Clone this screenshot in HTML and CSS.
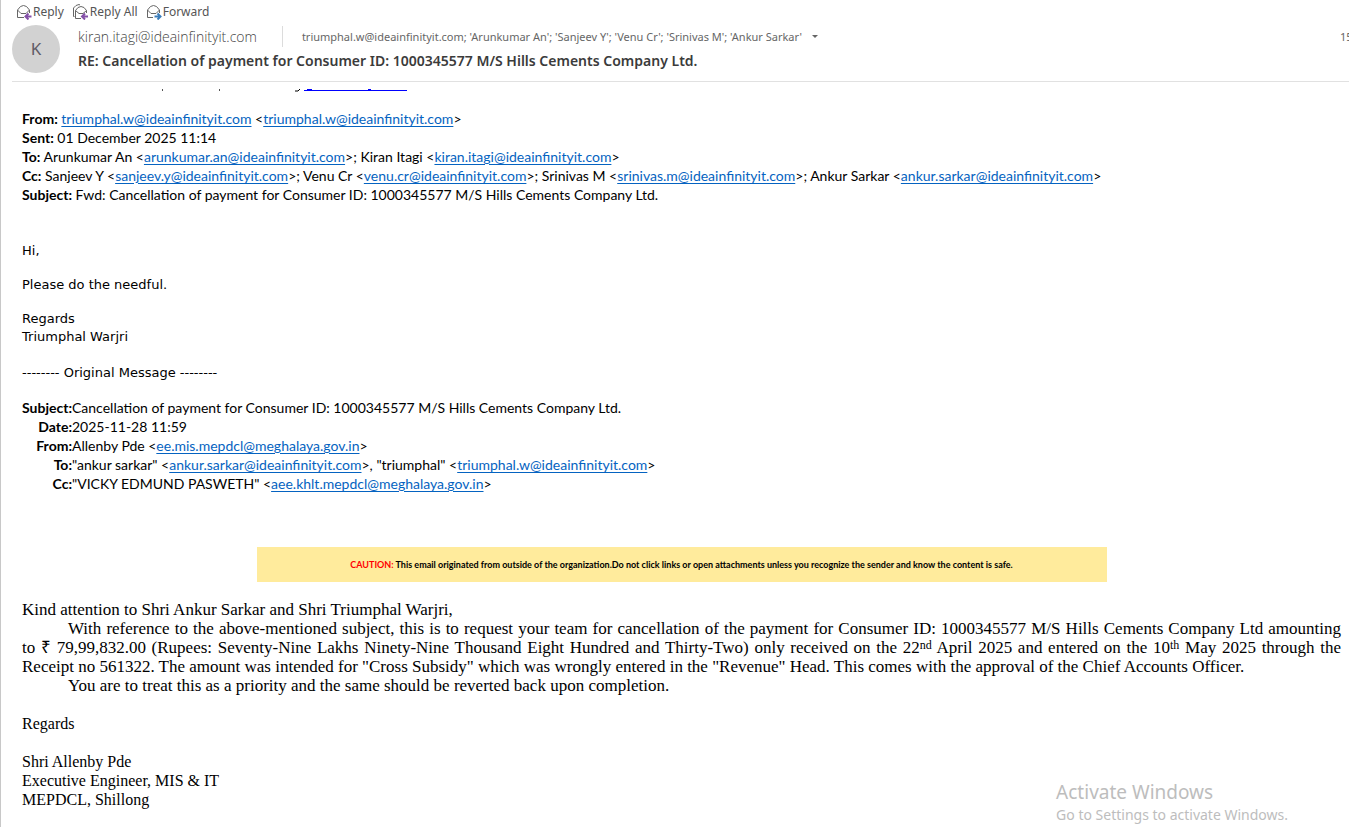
FILE: index.html
```html
<!DOCTYPE html>
<html lang="en">
<head>
    <meta charset="UTF-8">
    <meta name="viewport" content="width=device-width, initial-scale=1.0">
    <title>RE: Cancellation of payment for Consumer ID: 1000345577 M/S Hills Cements Company Ltd.</title>
    <link rel="stylesheet" href="styles.css">
</head>
<body>
    <div class="mail">
        <div class="toolbar">
            <button type="button" class="reply">
                <svg width="16" height="16" viewBox="0 0 16 16" fill="none">
                    <path d="M8 13.5H1.5V6L4.5 2.5L7.5 1.5L10.5 2.5L13.5 6V9M1.5 6L5 9.5H10L13.5 6" stroke="#666" />
                    <path d="M15.5 12.5H10M12.5 9.5L9.5 12.5L12.5 15.5" stroke="#8450a8" stroke-width="2" />
                </svg>
                Reply
            </button>
            <button type="button" class="reply-all">
                <svg width="17" height="16" viewBox="0 0 17 16" fill="none">
                    <path d="M2.5 12.5H1.5V4L4 1.5L7 0.5L8 1" stroke="#666" />
                    <path d="M9 14.5H3.5V6.5L6 3.5L9 2.5L12 3.5L14.5 6.5V9M3.5 6.5L7 9.5H11L14.5 6.5" stroke="#666" />
                    <path d="M16 12.5H10.5M13 9.5L10 12.5L13 15.5" stroke="#8450a8" stroke-width="2" />
                </svg>
                Reply All
            </button>
            <button type="button" class="forward">
                <svg width="16" height="16" viewBox="0 0 16 16" fill="none">
                    <path d="M7 13.5H1.5V6L4.5 2.5L7.5 1.5L10.5 2.5L13.5 6V9M1.5 6L5 9.5H10L13.5 6" stroke="#666" />
                    <path d="M8.5 12.5H14M11.5 9.5L14.5 12.5L11.5 15.5" stroke="#3c7ebb" stroke-width="2" />
                </svg>
                Forward
            </button>
        </div>

        <header class="mail-header">
            <div class="avatar">K</div>
            <div class="details">
                <div class="people">
                    <span class="sender">kiran.itagi@ideainfinityit.com</span>
                    <span class="recipients">triumphal.w@ideainfinityit.com; 'Arunkumar An'; 'Sanjeev Y'; 'Venu Cr'; 'Srinivas M'; 'Ankur Sarkar'</span>
                    <button type="button" class="expand" aria-label="Show all recipients"></button>
                    <span class="date">15</span>
                </div>
                <h1>RE: Cancellation of payment for Consumer ID: 1000345577 M/S Hills Cements Company Ltd.</h1>
            </div>
        </header>

        <main class="message">
            <!-- bottom edge of the line scrolled under the header -->
            <svg class="scrolled-line" width="400" height="3" viewBox="0 0 400 3" aria-hidden="true">
                <path d="M140.5 0V2M197.5 0V2" stroke="#555" />
                <path d="M273 2H276L278 0" stroke="#000" fill="none" />
                <path d="M282 1.5H385M285 0.5H290M346 0.5H349" stroke="#00f" />
            </svg>

            <div class="quoted">
                <div><b>From:</b> <a href="mailto:triumphal.w@ideainfinityit.com">triumphal.w@ideainfinityit.com</a> &lt;<a href="mailto:triumphal.w@ideainfinityit.com">triumphal.w@ideainfinityit.com</a>&gt;</div>
                <div><b>Sent:</b> 01 December 2025 11:14</div>
                <div><b>To:</b> Arunkumar An &lt;<a href="mailto:arunkumar.an@ideainfinityit.com">arunkumar.an@ideainfinityit.com</a>&gt;; Kiran Itagi &lt;<a href="mailto:kiran.itagi@ideainfinityit.com">kiran.itagi@ideainfinityit.com</a>&gt;</div>
                <div><b>Cc:</b> Sanjeev Y &lt;<a href="mailto:sanjeev.y@ideainfinityit.com">sanjeev.y@ideainfinityit.com</a>&gt;; Venu Cr &lt;<a href="mailto:venu.cr@ideainfinityit.com">venu.cr@ideainfinityit.com</a>&gt;; Srinivas M &lt;<a href="mailto:srinivas.m@ideainfinityit.com">srinivas.m@ideainfinityit.com</a>&gt;; Ankur Sarkar &lt;<a href="mailto:ankur.sarkar@ideainfinityit.com">ankur.sarkar@ideainfinityit.com</a>&gt;</div>
                <div><b>Subject:</b> Fwd: Cancellation of payment for Consumer ID: 1000345577 M/S Hills Cements Company Ltd.</div>
            </div>

            <div class="note">
                <p>Hi,</p>
                <p>Please do the needful.</p>
                <p>Regards<br>Triumphal Warjri</p>
                <p class="divider">-------- Original Message --------</p>
            </div>

            <table class="original">
                <tr>
                    <th scope="row">Subject:</th>
                    <td>Cancellation of payment for Consumer ID: 1000345577 M/S Hills Cements Company Ltd.</td>
                </tr>
                <tr>
                    <th scope="row">Date:</th>
                    <td>2025-11-28 11:59</td>
                </tr>
                <tr>
                    <th scope="row">From:</th>
                    <td>Allenby Pde &lt;<a href="mailto:ee.mis.mepdcl@meghalaya.gov.in">ee.mis.mepdcl@meghalaya.gov.in</a>&gt;</td>
                </tr>
                <tr>
                    <th scope="row">To:</th>
                    <td>"ankur sarkar" &lt;<a href="mailto:ankur.sarkar@ideainfinityit.com">ankur.sarkar@ideainfinityit.com</a>&gt;, "triumphal" &lt;<a href="mailto:triumphal.w@ideainfinityit.com">triumphal.w@ideainfinityit.com</a>&gt;</td>
                </tr>
                <tr>
                    <th scope="row">Cc:</th>
                    <td>"VICKY EDMUND PASWETH" &lt;<a href="mailto:aee.khlt.mepdcl@meghalaya.gov.in">aee.khlt.mepdcl@meghalaya.gov.in</a>&gt;</td>
                </tr>
            </table>

            <div class="caution"><span>CAUTION:</span> This email originated from outside of the organization.Do not click links or open attachments unless you recognize the sender and know the content is safe.</div>

            <div class="letter">
                <p>Kind attention to Shri Ankur Sarkar and Shri Triumphal Warjri,</p>
                <p class="indent justified">With reference to the above-mentioned subject, this is to request your team for cancellation of the payment for Consumer ID: 1000345577 M/S Hills Cements Company Ltd amounting</p>
                <p class="justified">to ₹ 79,99,832.00 (Rupees: Seventy-Nine Lakhs Ninety-Nine Thousand Eight Hundred and Thirty-Two) only received on the 22<sup>nd</sup> April 2025 and entered on the 10<sup>th</sup> May 2025 through the</p>
                <p>Receipt no 561322. The amount was intended for "Cross Subsidy" which was wrongly entered in the "Revenue" Head. This comes with the approval of the Chief Accounts Officer.</p>
                <p class="indent">You are to treat this as a priority and the same should be reverted back upon completion.</p>
            </div>

            <div class="signature">
                <p>Regards</p>
                <p>Shri Allenby Pde<br>Executive Engineer, MIS &amp; IT<br>MEPDCL, Shillong</p>
            </div>
        </main>
    </div>

    <div class="watermark">
        <div class="watermark-title">Activate Windows</div>
        <div>Go to Settings to activate Windows.</div>
    </div>
</body>
</html>
```

FILE: styles.css
```css
* {
    box-sizing: border-box;
}

body {
    margin: 0;
    background-color: #ffffff;
    color: #000000;
    overflow: hidden;
}

p,
h1 {
    margin: 0;
}

button {
    padding: 0;
    border: none;
    background: none;
    font: inherit;
    color: inherit;
    cursor: pointer;
}

a {
    color: #0563c1;
    text-underline-offset: 2px;
}

.mail {
    min-height: 100vh;
    border-left: 1px solid #c8c8c8;
}

.toolbar {
    display: flex;
    gap: 8px;
    height: 25px;
    padding: 0 0 2px 15px;
    font: 12px/16px "Noto Sans", sans-serif;
    color: #555555;
}

.toolbar button {
    display: flex;
    align-items: center;
    gap: 1px;
}

.mail-header {
    display: flex;
    gap: 18px;
    height: 57px;
    margin-left: 11px;
    border-bottom: 1px solid #e1e1e1;
    font-family: "Noto Sans", sans-serif;
}

.avatar {
    flex: none;
    width: 48px;
    height: 48px;
    border-radius: 50%;
    background-color: #d2d2d2;
    color: #5f5b66;
    font-size: 17px;
    line-height: 48px;
    text-align: center;
}

.details {
    flex: 1;
    min-width: 0;
    white-space: nowrap;
}

.people {
    display: flex;
    align-items: center;
    height: 23px;
    color: #666666;
}

.sender {
    padding-right: 25px;
    border-right: 1px solid #dcdcdc;
    color: #444444;
    font: 300 14px/21px "Open Sans", sans-serif;
}

.recipients {
    padding-left: 19px;
    font-size: 11px;
}

.expand {
    margin-left: 10px;
    border: 3px solid transparent;
    border-top-color: #666666;
    border-bottom: none;
}

.date {
    width: 9px;
    margin-left: auto;
    overflow: hidden;
    font-size: 11px;
}

h1 {
    color: #3b3b3b;
    font-size: 14px;
    font-weight: 600;
    line-height: 26px;
}

.message {
    padding: 7px 8px 16px 21px;
}

.scrolled-line {
    display: block;
}

.quoted,
.original {
    font: 14px/19px Lato, sans-serif;
}

.quoted {
    margin-top: 17px;
}

.note {
    margin-top: 38px;
    font: 13px/18px "DejaVu Sans", sans-serif;
}

.note p {
    margin-bottom: 16px;
}

.note .divider {
    margin: 18px 0 16px;
}

.original {
    border-collapse: collapse;
}

.original th,
.original td {
    padding: 0;
}

.original th {
    text-align: right;
}

.caution {
    max-width: 850px;
    margin: 54px auto 18px;
    background-color: #ffeb9c;
    font: bold 9px/35px Lato, sans-serif;
    text-align: center;
}

.caution span {
    color: #ff0000;
}

.letter {
    font: 17px/19px "Liberation Serif", serif;
}

.letter sup {
    font-size: 12px;
    line-height: 0;
    vertical-align: 4px;
}

.indent {
    text-indent: 46px;
}

.justified {
    text-align: justify;
    text-align-last: justify;
}

.signature {
    font: 16px/19px "Liberation Serif", serif;
}

.signature p {
    margin-top: 19px;
}

.watermark {
    position: absolute;
    right: 61px;
    bottom: 2px;
    color: #bdbdbd;
    font: 14px/20px "Noto Sans", sans-serif;
}

.watermark-title {
    font-size: 19px;
    line-height: 26px;
}
```
